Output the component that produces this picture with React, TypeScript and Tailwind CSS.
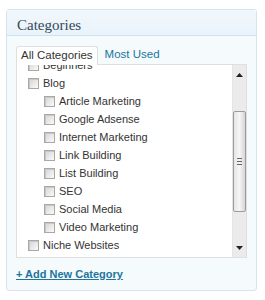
import React from "react";

const children = [
  "Article Marketing",
  "Google Adsense",
  "Internet Marketing",
  "Link Building",
  "List Building",
  "SEO",
  "Social Media",
  "Video Marketing",
];

const Box = () => (
  <span className="inline-block w-[11px] h-[11px] shrink-0 border border-[#a8a8a8] bg-gradient-to-br from-[#d4d4d4] to-[#fafafa] shadow-[inset_1px_1px_0_#c8c8c8]" />
);

const Row = ({ label, indent }: { label: string; indent?: boolean }) => (
  <li className={`flex items-center h-[18px] gap-[4px] ${indent ? "pl-[27px]" : "pl-[11px]"}`}>
    <Box />
    <span>{label}</span>
  </li>
);

export default function App() {
  return (
    <div className="w-[265px] h-[300px] bg-white pt-[9px] pl-[6px]">
      <div className="w-[251px] h-[282px] border border-[#d4e5f1] rounded-[3px] bg-[#f5fafd] flex flex-col">
        <div className="h-[26px] border-b border-[#cfe2ef] bg-gradient-to-b from-[#f1f8fd] to-[#e9f3fa] flex items-center pl-[10px] pt-[5px]">
          <h3 className="text-[15px] text-[#34495a] font-['Liberation_Serif',serif] leading-none">
            Categories
          </h3>
        </div>
        <div className="px-[9px] pt-[9px] font-['Liberation_Sans',Arial,sans-serif] text-[11px] text-[#333]">
          <div className="flex items-end h-[19px] text-[11.5px]">
            <div className="h-[19px] px-[4px] border border-b-0 border-[#dfdfdf] rounded-t-[3px] bg-white flex items-center -mb-px relative z-10">
              All Categories
            </div>
            <div className="h-[19px] px-[7px] flex items-center text-[#21759b]">Most Used</div>
          </div>
          <div className="h-[194px] border border-[#dfdfdf] bg-white flex overflow-hidden">
            <ul className="flex-1 -mt-[9px] overflow-hidden">
              <Row label="Beginners" />
              <Row label="Blog" />
              {children.map((c) => (
                <Row key={c} label={c} indent />
              ))}
              <Row label="Niche Websites" />
              <Row label="Uncategorized" />
            </ul>
            <div className="w-[14px] bg-[#ebebeb] flex flex-col items-center border-l border-[#e4e4e4]">
              <div className="h-[16px] flex items-center justify-center mt-[2px]">
                <svg width="7" height="4" viewBox="0 0 7 4">
                  <path d="M3.5 0 L7 4 L0 4 Z" fill="#222" />
                </svg>
              </div>
              <div className="mt-[28px] w-[13px] h-[101px] border border-[#9c9c9c] rounded-[2px] bg-gradient-to-r from-[#e6e6e6] via-[#f6f6f6] to-[#d6d6d6] flex flex-col items-center justify-center gap-[2px]">
                <span className="w-[5px] h-px bg-[#666]" />
                <span className="w-[5px] h-px bg-[#666]" />
                <span className="w-[5px] h-px bg-[#666]" />
              </div>
              <div className="flex-1" />
              <div className="h-[16px] flex items-center justify-center mb-[1px]">
                <svg width="7" height="4" viewBox="0 0 7 4">
                  <path d="M0 0 L7 0 L3.5 4 Z" fill="#222" />
                </svg>
              </div>
            </div>
          </div>
          <div className="mt-[8px]">
            <a href="#" className="text-[#21759b] underline font-bold text-[11px]">
              + Add New Category
            </a>
          </div>
        </div>
      </div>
    </div>
  );
}
